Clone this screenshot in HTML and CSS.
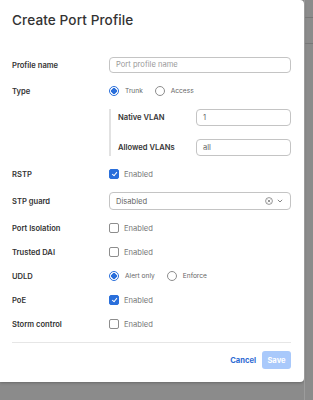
FILE: index.html
```html
<!DOCTYPE html>
<html lang="en">
<head>
  <meta charset="UTF-8">
  <meta name="viewport" content="width=device-width, initial-scale=1.0">
  <link rel="stylesheet" href="styles.css">
</head>
<body>

<div class="backdrop">
  <div class="modal">
    <h1 class="modal-title">Create Port Profile</h1>

    <div class="form">
      <div class="row">
        <label class="row-label">Profile name</label>
        <div class="text-input placeholder">Port profile name</div>
      </div>

      <div class="row">
        <span class="row-label">Type</span>
        <div class="options">
          <span class="radio checked"></span><span class="option-text">Trunk</span>
          <span class="radio"></span><span class="option-text">Access</span>
        </div>
      </div>

      <div class="trunk-box">
        <div class="sub-row">
          <span class="sub-label">Native VLAN</span>
          <div class="text-input">1</div>
        </div>
        <div class="sub-row">
          <span class="sub-label">Allowed VLANs</span>
          <div class="text-input">all</div>
        </div>
      </div>

      <div class="row">
        <span class="row-label">RSTP</span>
        <div class="options"><span class="checkbox checked"></span><span class="check-text">Enabled</span></div>
      </div>

      <div class="row">
        <span class="row-label">STP guard</span>
        <div class="select">
          <span class="select-value">Disabled</span>
          <svg class="select-clear" width="8" height="8" viewBox="0 0 8 8">
            <circle cx="4" cy="4" r="3.4" fill="none" stroke="#8a8a8a" stroke-width="0.9"/>
            <path d="M2.7 2.7 L5.3 5.3 M5.3 2.7 L2.7 5.3" stroke="#8a8a8a" stroke-width="0.9"/>
          </svg>
          <svg class="select-arrow" width="6" height="4" viewBox="0 0 6 4">
            <path d="M0.8 0.8 L3 3 L5.2 0.8" fill="none" stroke="#777" stroke-width="0.9"/>
          </svg>
        </div>
      </div>

      <div class="row">
        <span class="row-label">Port Isolation</span>
        <div class="options"><span class="checkbox"></span><span class="check-text">Enabled</span></div>
      </div>

      <div class="row">
        <span class="row-label">Trusted DAI</span>
        <div class="options"><span class="checkbox"></span><span class="check-text">Enabled</span></div>
      </div>

      <div class="row">
        <span class="row-label">UDLD</span>
        <div class="options">
          <span class="radio checked"></span><span class="option-text">Alert only</span>
          <span class="radio"></span><span class="option-text">Enforce</span>
        </div>
      </div>

      <div class="row">
        <span class="row-label">PoE</span>
        <div class="options"><span class="checkbox checked"></span><span class="check-text">Enabled</span></div>
      </div>

      <div class="row">
        <span class="row-label">Storm control</span>
        <div class="options"><span class="checkbox"></span><span class="check-text">Enabled</span></div>
      </div>
    </div>

    <div class="modal-footer">
      <button class="btn-cancel">Cancel</button>
      <button class="btn-save">Save</button>
    </div>
  </div>

  <div class="page-edge">
    <div class="edge-line"></div>
    <div class="edge-line"></div>
  </div>
</div>

</body>
</html>
```

FILE: styles.css
```css
body {
  margin: 0;
  background-color: #8b8b8b;
  font-family: 'Inter', 'Noto Sans', sans-serif;
  color: #2f2f2f;
}

.backdrop {
  display: flex;
  align-items: flex-start;
  height: 400px;
}

.modal {
  box-sizing: border-box;
  width: 304px;
  height: 382px;
  flex-shrink: 0;
  background-color: #fff;
  border-radius: 0 4px 4px 0;
  padding: 0 13px 13px 12px;
  box-shadow: 0 1px 3px rgba(0, 0, 0, 0.25);
  display: flex;
  flex-direction: column;
}

.modal-title {
  margin: 0;
  padding-top: 11px;
  height: 57px;
  box-sizing: border-box;
  font-size: 13.6px;
  line-height: 18px;
  font-weight: 500;
  color: #333;
  letter-spacing: 0.1px;
}

.form {
  display: flex;
  flex-direction: column;
  gap: 12px;
  padding-bottom: 12px;
  border-bottom: 1px solid #e6e6e6;
}

.row {
  display: grid;
  grid-template-columns: 97px 1fr;
  align-items: center;
  min-height: 12px;
}

.row-label,
.sub-label {
  font-size: 7.6px;
  font-weight: 600;
  color: #333;
}

.text-input {
  box-sizing: border-box;
  height: 16px;
  border: 1px solid #c4c4c4;
  border-radius: 4px;
  padding: 0 6px;
  font-size: 7.6px;
  line-height: 14px;
  color: #666;
}

.placeholder {
  color: #9a9a9a;
}

.options {
  display: flex;
  align-items: center;
  height: 12px;
}

.radio {
  box-sizing: border-box;
  width: 10px;
  height: 10px;
  border: 1px solid #8d8d8d;
  border-radius: 50%;
  margin-right: 6px;
}

.radio.checked {
  border-color: #2a6fdb;
  background: radial-gradient(circle, #2a6fdb 0, #2a6fdb 2.6px, #fff 3px);
}

.option-text {
  font-size: 6.6px;
  color: #666;
  margin-right: 12px;
}

.checkbox {
  box-sizing: border-box;
  width: 10px;
  height: 10px;
  border: 1px solid #8d8d8d;
  border-radius: 2px;
  margin-right: 5px;
  position: relative;
}

.checkbox.checked {
  background-color: #2a6fdb;
  border-color: #2a6fdb;
}

.checkbox.checked::after {
  content: "";
  position: absolute;
  left: 2.6px;
  top: 1.2px;
  width: 2.2px;
  height: 4.2px;
  border: solid #fff;
  border-width: 0 1.1px 1.1px 0;
  transform: rotate(40deg);
}

.check-text {
  font-size: 7.6px;
  color: #777;
}

.trunk-box {
  margin-left: 97px;
  border-left: 2px solid #e2e2e2;
  padding-left: 7px;
  display: flex;
  flex-direction: column;
  gap: 13px;
}

.sub-row {
  display: grid;
  grid-template-columns: 78px 1fr;
  align-items: center;
}

.sub-row .text-input {
  height: 17px;
  line-height: 15px;
}

.select {
  box-sizing: border-box;
  height: 18px;
  border: 1px solid #c4c4c4;
  border-radius: 4px;
  padding: 0 7px 0 6px;
  display: flex;
  align-items: center;
}

.select-value {
  flex: 1;
  font-size: 7.6px;
  color: #666;
}

.select-clear {
  margin-right: 4px;
}

.modal-footer {
  display: flex;
  justify-content: flex-end;
  align-items: center;
  gap: 6px;
  padding-top: 8px;
}

.btn-cancel {
  border: none;
  background: none;
  padding: 0;
  font-family: inherit;
  font-size: 7.6px;
  font-weight: 700;
  color: #2d6ad3;
}

.btn-save {
  border: none;
  width: 29px;
  height: 18px;
  border-radius: 3px;
  background-color: #a9c9fb;
  color: #fff;
  font-family: inherit;
  font-size: 7.6px;
  font-weight: 700;
  padding: 0;
}

.page-edge {
  flex: 1;
  height: 400px;
  padding-top: 17px;
  border-left: 1px solid #9c9c9c;
}

.edge-line {
  height: 1px;
  background-color: #777;
  margin-bottom: 25px;
}
```
